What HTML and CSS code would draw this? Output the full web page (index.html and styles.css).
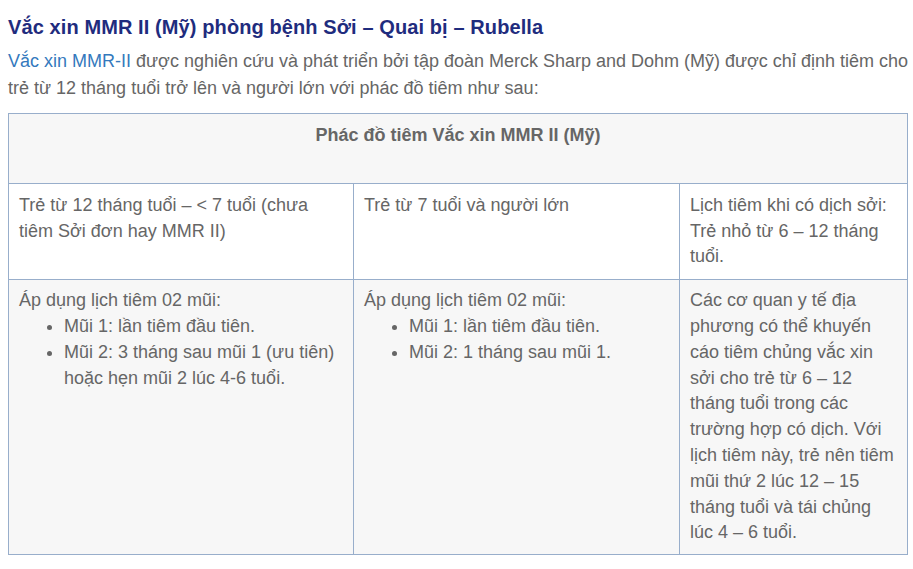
FILE: index.html
```html
<!DOCTYPE html>
<html lang="vi">
<head>
<meta charset="utf-8">
<title>Vắc xin MMR II</title>
<link rel="stylesheet" href="styles.css">
</head>
<body>
<h3 class="title">Vắc xin MMR II (Mỹ) phòng bệnh Sởi – Quai bị – Rubella</h3>
<p class="intro"><a class="link" href="#">Vắc xin MMR-II</a> được nghiên cứu và phát triển bởi tập đoàn Merck Sharp and Dohm (Mỹ) được chỉ định tiêm cho trẻ từ 12 tháng tuổi trở lên và người lớn với phác đồ tiêm như sau:</p>
<table class="sched">
  <colgroup>
    <col class="c1"><col class="c2"><col class="c3">
  </colgroup>
  <tr class="head">
    <td colspan="3"><p class="head-text">Phác đồ tiêm Vắc xin MMR II (Mỹ)</p></td>
  </tr>
  <tr class="plain">
    <td>Trẻ từ 12 tháng tuổi – &lt; 7 tuổi (chưa tiêm Sởi đơn hay MMR II)</td>
    <td>Trẻ từ 7 tuổi và người lớn</td>
    <td>Lịch tiêm khi có dịch sởi: Trẻ nhỏ từ 6 – 12 tháng tuổi.</td>
  </tr>
  <tr class="shaded">
    <td>Áp dụng lịch tiêm 02 mũi:
      <ul class="doses">
        <li>Mũi 1: lần tiêm đầu tiên.</li>
        <li>Mũi 2: 3 tháng sau mũi 1 (ưu tiên) hoặc hẹn mũi 2 lúc 4-6 tuổi.</li>
      </ul>
    </td>
    <td>Áp dụng lịch tiêm 02 mũi:
      <ul class="doses">
        <li>Mũi 1: lần tiêm đầu tiên.</li>
        <li>Mũi 2: 1 tháng sau mũi 1.</li>
      </ul>
    </td>
    <td>Các cơ quan y tế địa phương có thể khuyến cáo tiêm chủng vắc xin sởi cho trẻ từ 6 – 12 tháng tuổi trong các trường hợp có dịch. Với lịch tiêm này, trẻ nên tiêm mũi thứ 2 lúc 12 – 15 tháng tuổi và tái chủng lúc 4 – 6 tuổi.</td>
  </tr>
</table>
</body>
</html>
```
FILE: styles.css
```css
html, body {
  margin: 0;
  padding: 0;
  background: #ffffff;
}
body {
  padding: 0 4px 0 8px;
  font-family: "Liberation Sans", Arial, sans-serif;
  font-size: 18px;
  line-height: 25.8px;
  color: #666666;
}
.title {
  margin: 14px 0 8px;
  font-size: 20px;
  letter-spacing: 0.1px;
  line-height: 26px;
  font-weight: bold;
  color: #1f2c7e;
}
.intro {
  margin: 0 0 11px;
  line-height: 27px;
}
.link {
  color: #3479bd;
  text-decoration: none;
}
.sched {
  width: 899px;
  border-collapse: collapse;
  table-layout: fixed;
}
.c1 { width: 345px; }
.c2 { width: 326px; }
.c3 { width: 228px; }
.sched td {
  border: 1px solid #98aecb;
  padding: 8px 10px;
  vertical-align: top;
}
.head td {
  background: #f7f7f7;
  text-align: center;
  font-weight: bold;
  padding-top: 9px;
  padding-bottom: 8px;
}
.head-text {
  margin: 0 0 26px;
}
.plain td {
  background: #ffffff;
  padding-top: 9px;
  padding-bottom: 9px;
}
.shaded td {
  background: #f7f7f7;
}
.doses {
  margin: 0;
  padding-left: 45px;
}
```
